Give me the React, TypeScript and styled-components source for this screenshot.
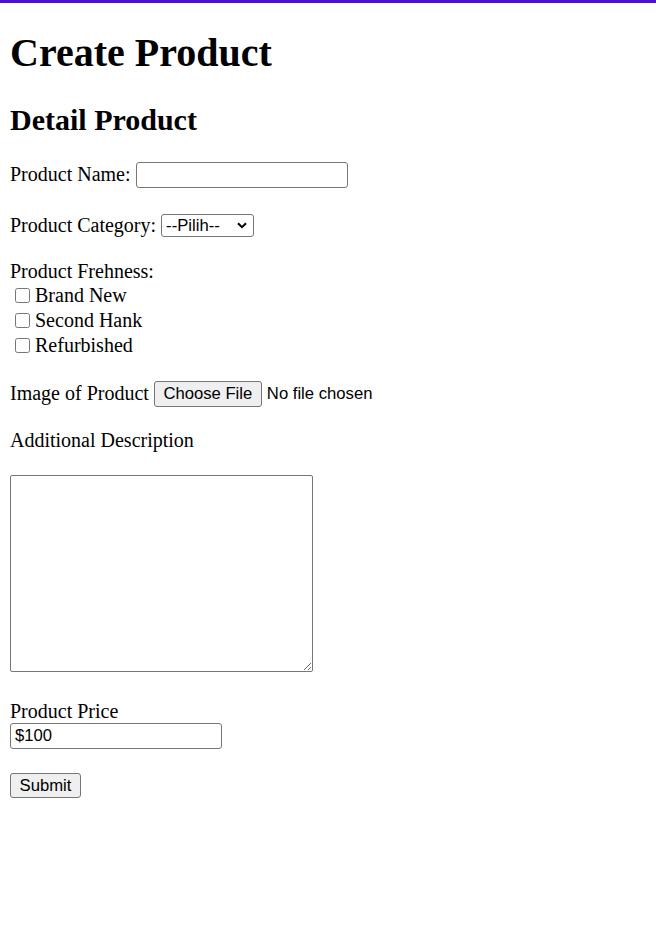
import React from "react";
import styled, { createGlobalStyle } from "styled-components";

const GlobalStyle = createGlobalStyle`
	html, body {
		margin: 0;
		padding: 0;
		background: #ffffff;
	}
	body {
		font-family: "Liberation Serif", "Times New Roman", serif;
		font-size: 20px;
		color: #000000;
	}
`;

const TopBar = styled.div`
	height: 3px;
	background-color: #4b0fd3;
`;

const Page = styled.div`
	padding: 0 10px;
`;

const Title = styled.h1`
	margin: 27px 0 0;
	font-size: 40px;
	line-height: 46px;
	font-weight: bold;
`;

const SubTitle = styled.h2`
	margin: 27px 0 24px;
	font-size: 30px;
	line-height: 34.5px;
	font-weight: bold;
`;

const Form = styled.form`
	display: flex;
	flex-direction: column;
	align-items: flex-start;
`;

/* one line of the form: a label followed by its control */
const Row = styled.div<{ $gap?: number }>`
	display: flex;
	align-items: center;
	gap: 5px;
	margin-bottom: ${({ $gap }) => $gap ?? 0}px;
`;

const Label = styled.label`
	font-size: 20px;
	line-height: 23px;
	white-space: nowrap;
	margin-bottom: 1px;
`;

const TextLine = styled.div<{ $gap?: number }>`
	font-size: 20px;
	line-height: 23px;
	margin-bottom: ${({ $gap }) => $gap ?? 0}px;
`;

const TextInput = styled.input`
	box-sizing: border-box;
	width: 212px;
	height: 26px;
	padding: 1px 4px;
	border: 1px solid #767676;
	border-radius: 3px;
	font-family: "Liberation Sans", Arial, sans-serif;
	font-size: 16.67px;
	color: #000000;
	background: #ffffff;
	outline: none;
`;

const SelectWrap = styled.div`
	position: relative;
	display: flex;
`;

const Select = styled.select`
	box-sizing: border-box;
	width: 93px;
	height: 23px;
	padding: 0 0 0 4px;
	border: 1px solid #767676;
	border-radius: 3px;
	font-family: "Liberation Sans", Arial, sans-serif;
	font-size: 16.67px;
	color: #000000;
	background: #ffffff;
	appearance: none;
	-webkit-appearance: none;
`;

const Chevron = styled.svg`
	position: absolute;
	right: 7px;
	top: 8px;
	pointer-events: none;
`;

const CheckList = styled.div`
	display: flex;
	flex-direction: column;
	margin: 0 0 22.5px;
`;

const CheckRow = styled.label`
	display: flex;
	align-items: center;
	height: 25px;
	font-size: 20px;
	line-height: 23px;
`;

const CheckBox = styled.input`
	width: 15px;
	height: 15px;
	margin: 0 5px 1px 5px;
`;

const FileInput = styled.input`
	font-family: "Liberation Sans", Arial, sans-serif;
	font-size: 16.67px;
	color: #000000;

	&::file-selector-button {
		box-sizing: border-box;
		width: 108px;
		height: 26px;
		margin-right: 5px;
		padding: 0;
		border: 1px solid #767676;
		border-radius: 3px;
		background-color: #efefef;
		font-family: "Liberation Sans", Arial, sans-serif;
		font-size: 16.67px;
		color: #000000;
	}
`;

const TextArea = styled.textarea`
	box-sizing: border-box;
	width: 303px;
	height: 197px;
	margin: 0 0 28.5px;
	border: 1px solid #767676;
	border-radius: 2px;
	font-family: "Liberation Mono", monospace;
	font-size: 16px;
	background: #ffffff;
`;

const SubmitButton = styled.button<{ $top: number }>`
	box-sizing: border-box;
	width: 71px;
	height: 25px;
	margin-top: ${({ $top }) => $top}px;
	padding: 0;
	border: 1px solid #767676;
	border-radius: 3px;
	background-color: #efefef;
	font-family: "Liberation Sans", Arial, sans-serif;
	font-size: 16.67px;
	color: #000000;
`;

const freshness = ["Brand New", "Second Hank", "Refurbished"];

const App: React.FC = () => {
	return (
		<>
			<GlobalStyle />
			<TopBar />
			<Page>
				<Title>Create Product</Title>
				<SubTitle>Detail Product</SubTitle>
				<Form onSubmit={(e) => e.preventDefault()}>
					<Row $gap={26}>
						<Label htmlFor="productName">Product Name:</Label>
						<TextInput id="productName" type="text" />
					</Row>
					<Row $gap={22.5}>
						<Label htmlFor="productCategory">Product Category:</Label>
						<SelectWrap>
							<Select id="productCategory" defaultValue="">
								<option value="">--Pilih--</option>
								<option value="1">Elektronik</option>
								<option value="2">Fashion</option>
							</Select>
							<Chevron width="10" height="7" viewBox="0 0 10 7">
								<path
									d="M1 1.2 L5 5.2 L9 1.2"
									fill="none"
									stroke="#000"
									strokeWidth="2"
								/>
							</Chevron>
						</SelectWrap>
					</Row>
					<TextLine>Product Frehness:</TextLine>
					<CheckList>
						{freshness.map((item) => (
							<CheckRow key={item}>
								<CheckBox type="checkbox" value={item} />
								{item}
							</CheckRow>
						))}
					</CheckList>
					<Row $gap={22.5}>
						<Label htmlFor="productImage">Image of Product</Label>
						<FileInput id="productImage" type="file" />
					</Row>
					<TextLine $gap={22.5}>Additional Description</TextLine>
					<TextArea />
					<TextLine>Product Price</TextLine>
					<TextInput type="text" defaultValue="$100" />
					<SubmitButton type="submit" $top={24}>
						Submit
					</SubmitButton>
				</Form>
			</Page>
		</>
	);
};

export default App;
